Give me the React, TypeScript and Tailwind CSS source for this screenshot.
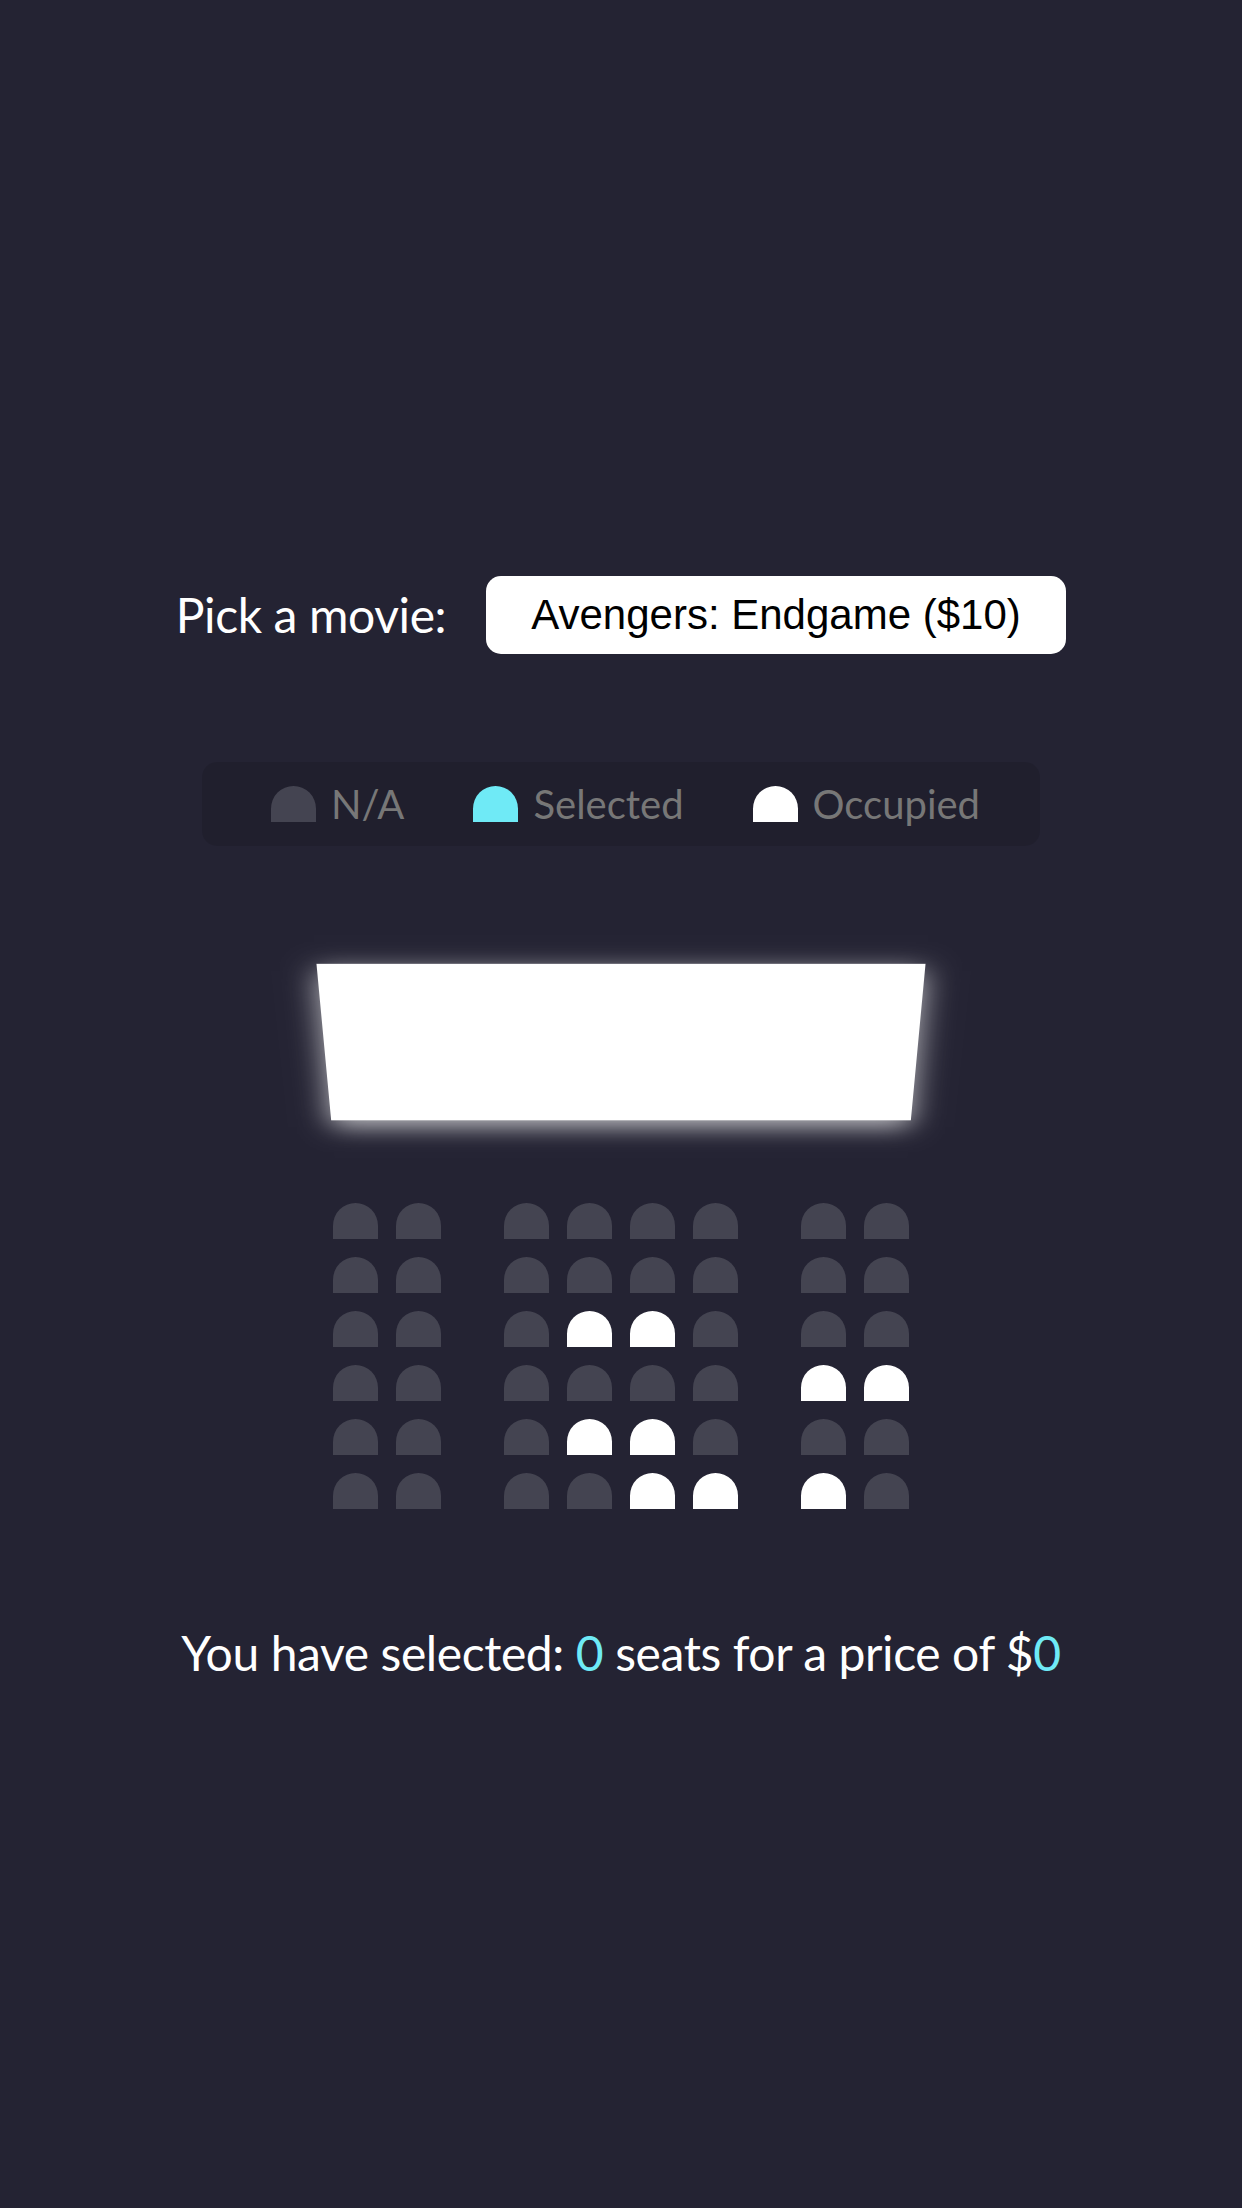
import React from "react";

const occupied: Record<number, number[]> = {
  2: [3, 4],
  3: [6, 7],
  4: [3, 4],
  5: [4, 5, 6],
};

function Seat({ state, extra = "" }: { state: "na" | "sel" | "occ"; extra?: string }) {
  const color =
    state === "occ" ? "bg-white" : state === "sel" ? "bg-[#6feaf6]" : "bg-[#444451]";
  return <div className={`h-[36px] w-[45px] m-[9px] shrink-0 rounded-t-[30px] ${color} ${extra}`} />;
}

export default function App() {
  return (
    <div
      className="flex h-screen flex-col items-center justify-center bg-[#242333] pt-[6px] text-white text-[48px] tracking-[-0.4px]"
      style={{ fontFamily: "Lato, 'Noto Sans', sans-serif" }}
    >
      <div className="my-[60px] flex items-center">
        <label className="mr-[10px] leading-[1.2]">Pick a movie:</label>
        <select
          className="ml-[30px] h-[78px] appearance-none rounded-[15px] border-0 bg-white px-[45px] py-0 text-[42px] leading-[48px] tracking-normal text-black outline-none"
          style={{ fontFamily: "'Liberation Sans', Arial, sans-serif" }}
          defaultValue="10"
        >
          <option value="10">Avengers: Endgame ($10)</option>
          <option value="12">Joker ($12)</option>
          <option value="8">Toy Story 4 ($8)</option>
          <option value="9">The Lion King ($9)</option>
        </select>
      </div>

      <ul className="my-[48px] flex h-[84px] items-center justify-between rounded-[15px] bg-[rgba(0,0,0,0.1)] px-[30px] py-[15px] tracking-normal text-[#777]">
        <li className="mx-[30px] flex items-center justify-center">
          <Seat state="na" />
          <small className="ml-[6px] text-[40px] leading-[1.2]">N/A</small>
        </li>
        <li className="mx-[30px] flex items-center justify-center">
          <Seat state="sel" />
          <small className="ml-[6px] text-[40px] leading-[1.2]">Selected</small>
        </li>
        <li className="mx-[30px] flex items-center justify-center">
          <Seat state="occ" />
          <small className="ml-[6px] text-[40px] leading-[1.2]">Occupied</small>
        </li>
      </ul>

      <div className="mb-[90px] [perspective:3000px]">
        <div className="my-[45px] h-[210px] w-full bg-white [transform:rotateX(-45deg)] shadow-[0_9px_30px_rgba(255,255,255,0.7)]" />
        {[0, 1, 2, 3, 4, 5].map((r) => (
          <div key={r} className="flex">
            {[0, 1, 2, 3, 4, 5, 6, 7].map((c) => (
              <Seat
                key={c}
                state={(occupied[r] || []).includes(c) ? "occ" : "na"}
                extra={c === 1 ? "mr-[54px]" : c === 6 ? "ml-[54px]" : ""}
              />
            ))}
          </div>
        ))}
      </div>

      <p className="my-[15px] leading-[1.25]">
        You have selected: <span className="text-[#6feaf6]">0</span> seats for a price of $
        <span className="text-[#6feaf6]">0</span>
      </p>
    </div>
  );
}
